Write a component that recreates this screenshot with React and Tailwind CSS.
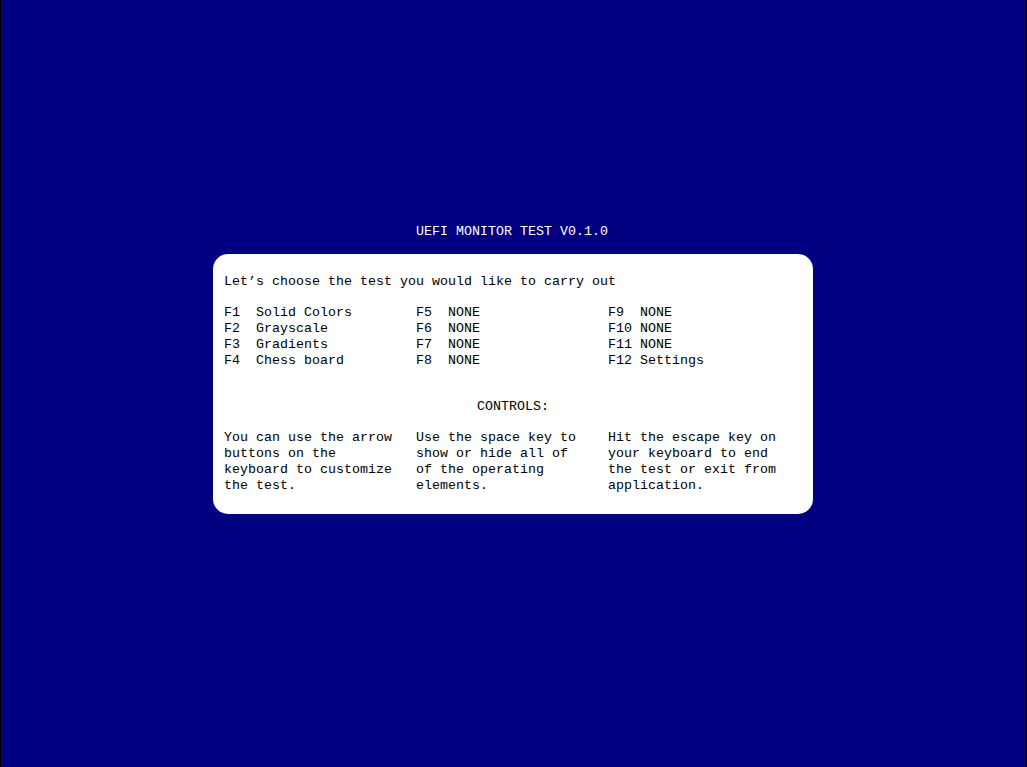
import React from 'react'

const menu = [
  ['F1  Solid Colors', 'F5  NONE', 'F9  NONE'],
  ['F2  Grayscale', 'F6  NONE', 'F10 NONE'],
  ['F3  Gradients', 'F7  NONE', 'F11 NONE'],
  ['F4  Chess board', 'F8  NONE', 'F12 Settings'],
]

const controls = [
  ['You can use the arrow', 'buttons on the', 'keyboard to customize', 'the test.'],
  ['Use the space key to', 'show or hide all of', 'of the operating', 'elements.'],
  ['Hit the escape key on', 'your keyboard to end', 'the test or exit from', 'application.'],
]

export default function App() {
  return (
    <div
      className="w-full h-[767px] bg-[#000080] border-x border-black pt-[224px] text-[13.333px] leading-4 whitespace-pre"
      style={{ fontFamily: '"Liberation Mono", "DejaVu Sans Mono", monospace' }}
    >
      <div className="w-[600px] ml-[212px] flex flex-col">
        <div className="h-4 text-white pl-[203px]">UEFI MONITOR TEST V0.1.0</div>
        <div className="mt-[14px] h-[260px] bg-white rounded-[15px] pl-[11px] pt-[20px] text-black">
          <div>Let’s choose the test you would like to carry out</div>
          <div className="mt-[15px] flex flex-col">
            {menu.map((row, i) => (
              <div key={i} className="grid grid-cols-[192px_192px_192px]">
                {row.map((c) => (
                  <div key={c}>{c}</div>
                ))}
              </div>
            ))}
          </div>
          <div className="mt-[30px] pl-[253px]">CONTROLS:</div>
          <div className="mt-[15px] grid grid-cols-[192px_192px_192px]">
            {controls.map((col, i) => (
              <div key={i} className="flex flex-col">
                {col.map((l) => (
                  <div key={l}>{l}</div>
                ))}
              </div>
            ))}
          </div>
        </div>
      </div>
    </div>
  )
}
